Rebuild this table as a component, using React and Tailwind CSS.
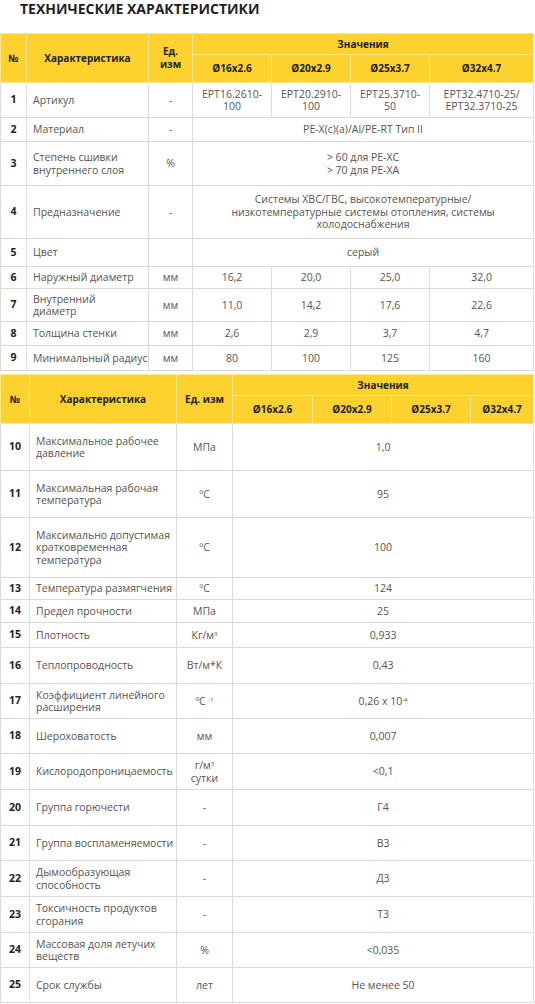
const font = { fontFamily: '"Open Sans", "Liberation Sans", sans-serif' };

const sizes = ["Ø16x2.6", "Ø20x2.9", "Ø25x3.7", "Ø32x4.7"];

const th = "bg-[#fdd22f] border border-[#fde78c] text-[10px] font-bold text-[#222] text-center align-middle leading-[13px]";
const td = "border border-[#dcdcdc] text-[10.5px] text-[#555] align-middle leading-[12.5px]";
const num = "border border-[#dcdcdc] text-[10.5px] font-bold text-[#222] text-center align-middle";

const firstRows = [
  { n: 1, h: 35, name: "Артикул", unit: "-", vals: [["EPT16.2610-", "100"], ["EPT20.2910-", "100"], ["EPT25.3710-", "50"], ["EPT32.4710-25/", "EPT32.3710-25"]] },
  { n: 2, h: 24, name: "Материал", unit: "-", all: ["PE-X(c)(a)/Al/PE-RT Тип II"] },
  { n: 3, h: 44, name: ["Степень сшивки", "внутреннего слоя"], unit: "%", all: ["> 60 для PE-XC", "> 70 для PE-XA"] },
  { n: 4, h: 53, name: "Предназначение", unit: "-", all: ["Системы ХВС/ГВС, высокотемпературные/", "низкотемпературные системы отопления, системы", "холодоснабжения"] },
  { n: 5, h: 28, name: "Цвет", unit: "", all: ["серый"] },
  { n: 6, h: 22, name: "Наружный диаметр", unit: "мм", vals: [["16,2"], ["20,0"], ["25,0"], ["32,0"]] },
  { n: 7, h: 33, name: ["Внутренний", "диаметр"], unit: "мм", vals: [["11,0"], ["14,2"], ["17,6"], ["22,6"]] },
  { n: 8, h: 24, name: "Толщина стенки", unit: "мм", vals: [["2,6"], ["2,9"], ["3,7"], ["4,7"]] },
  { n: 9, h: 25, name: "Минимальный радиус", unit: "мм", vals: [["80"], ["100"], ["125"], ["160"]] },
];

// small raised index, kept on the line so rows don't grow
const sup = (t) => <span className="relative -top-[3px] text-[6px] leading-none">{t}</span>;

const secondRows = [
  { n: 10, h: 47, name: ["Максимальное рабочее", "давление"], unit: "МПа", val: "1,0" },
  { n: 11, h: 47, name: ["Максимальная рабочая", "температура"], unit: "ºC", val: "95" },
  { n: 12, h: 60, name: ["Максимально допустимая", "кратковременная", "температура"], unit: "ºC", val: "100" },
  { n: 13, h: 22, name: "Температура размягчения", unit: "ºC", val: "124" },
  { n: 14, h: 23, name: "Предел прочности", unit: "МПа", val: "25" },
  { n: 15, h: 25, name: "Плотность", unit: <>Кг/м{sup("3")}</>, val: "0,933" },
  { n: 16, h: 36, name: "Теплопроводность", unit: "Вт/м*К", val: "0,43" },
  { n: 17, h: 35, name: ["Коэффициент линейного", "расширения"], unit: <>ºC {sup("-1")}</>, val: <>0,26 x 10{sup("-4")}</> },
  { n: 18, h: 35, name: "Шероховатость", unit: "мм", val: "0,007" },
  { n: 19, h: 36, name: "Кислородопроницаемость", unit: <>г/м{sup("3")}<br />сутки</>, val: "<0,1" },
  { n: 20, h: 36, name: "Группа горючести", unit: "-", val: "Г4" },
  { n: 21, h: 35, name: "Группа воспламеняемости", unit: "-", val: "В3" },
  { n: 22, h: 36, name: ["Дымообразующая", "способность"], unit: "-", val: "Д3" },
  { n: 23, h: 36, name: ["Токсичность продуктов", "сгорания"], unit: "-", val: "Т3" },
  { n: 24, h: 35, name: ["Массовая доля летучих", "веществ"], unit: "%", val: "<0,035" },
  { n: 25, h: 35, name: "Срок службы", unit: "лет", val: "Не менее 50" },
];

const Lines = ({ lines }) =>
  (Array.isArray(lines) ? lines : [lines]).map((l, i) => <div key={i}>{l}</div>);

export default function App() {
  return (
    <div className="bg-white w-[535px] min-h-[1004px] overflow-hidden" style={font}>
      <h1 className="pl-[20px] pt-[1px] h-[33px] text-[14px] leading-[16px] font-bold text-[#1f1f1f]">
        ТЕХНИЧЕСКИЕ ХАРАКТЕРИСТИКИ
      </h1>

      <table className="table-fixed border-collapse w-[533px]">
        <colgroup>
          <col className="w-[26px]" />
          <col className="w-[122px]" />
          <col className="w-[44px]" />
          <col className="w-[79px]" />
          <col className="w-[79px]" />
          <col className="w-[79px]" />
          <col className="w-[104px]" />
        </colgroup>
        <thead>
          <tr className="h-[21px]">
            <th rowSpan={2} className={th}>№</th>
            <th rowSpan={2} className={th}>Характеристика</th>
            <th rowSpan={2} className={th}>Ед.<br />изм</th>
            <th colSpan={4} className={th}>Значения</th>
          </tr>
          <tr className="h-[28px]">
            {sizes.map((s) => (
              <th key={s} className={th}>{s}</th>
            ))}
          </tr>
        </thead>
        <tbody>
          {firstRows.map((r) => (
            <tr key={r.n} style={{ height: r.h }}>
              <td className={num}>{r.n}</td>
              <td className={`${td} pl-[6px]`}><Lines lines={r.name} /></td>
              <td className={`${td} text-center`}>{r.unit}</td>
              {r.all ? (
                <td colSpan={4} className={`${td} text-center`}><Lines lines={r.all} /></td>
              ) : (
                r.vals.map((v, i) => (
                  <td key={i} className={`${td} text-center`}><Lines lines={v} /></td>
                ))
              )}
            </tr>
          ))}
        </tbody>
      </table>

      <table className="table-fixed border-collapse w-[533px] mt-[3px]">
        <colgroup>
          <col className="w-[29px]" />
          <col className="w-[147px]" />
          <col className="w-[56px]" />
          <col className="w-[80px]" />
          <col className="w-[79px]" />
          <col className="w-[79px]" />
          <col className="w-[63px]" />
        </colgroup>
        <thead>
          <tr className="h-[21px]">
            <th rowSpan={2} className={th}>№</th>
            <th rowSpan={2} className={th}>Характеристика</th>
            <th rowSpan={2} className={th}>Ед. изм</th>
            <th colSpan={4} className={th}>Значения</th>
          </tr>
          <tr className="h-[28px]">
            {sizes.map((s) => (
              <th key={s} className={th}>{s}</th>
            ))}
          </tr>
        </thead>
        <tbody>
          {secondRows.map((r) => (
            <tr key={r.n} style={{ height: r.h }}>
              <td className={num}>{r.n}</td>
              <td className={`${td} pl-[6px]`}><Lines lines={r.name} /></td>
              <td className={`${td} text-center`}>{r.unit}</td>
              <td colSpan={4} className={`${td} text-center`}>{r.val}</td>
            </tr>
          ))}
        </tbody>
      </table>
    </div>
  );
}
